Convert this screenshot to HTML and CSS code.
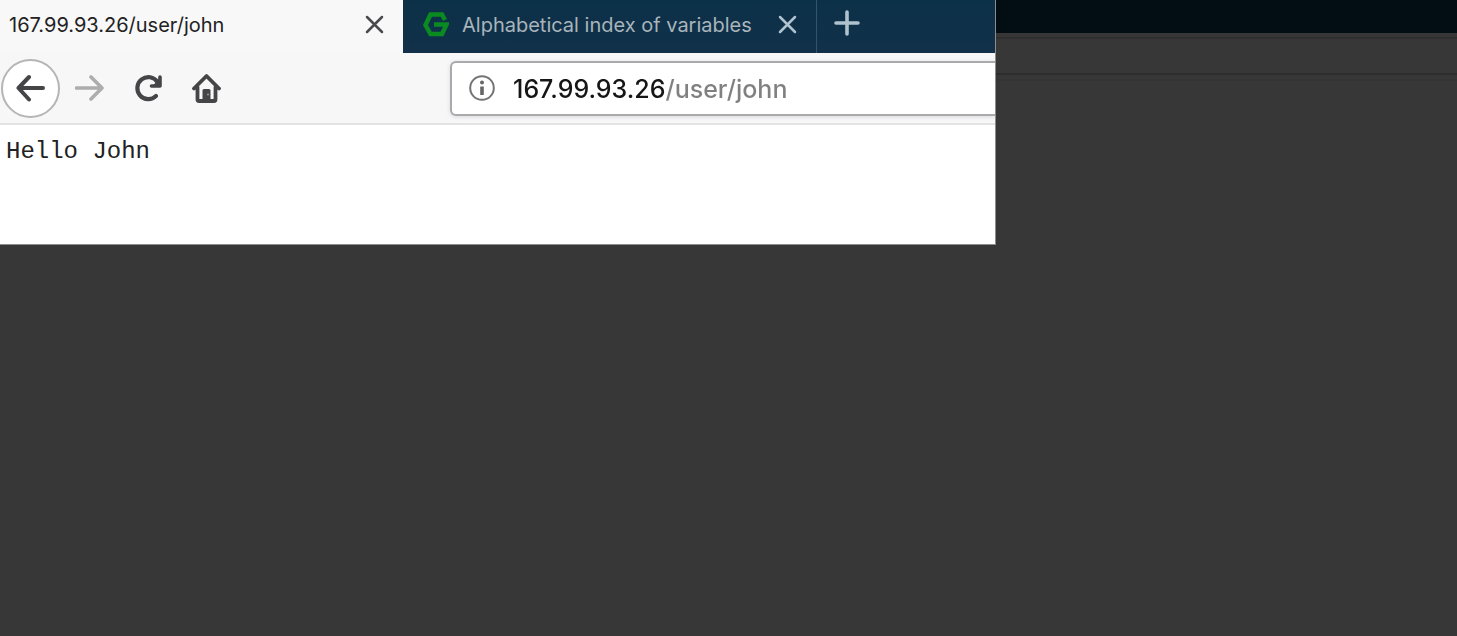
FILE: index.html
```html
<!DOCTYPE html>
<html lang="en">
<head>
<meta charset="utf-8">
<title>167.99.93.26/user/john</title>
<link rel="stylesheet" href="styles.css">
</head>
<body>
<div class="desktop">
  <section class="browser">
    <div class="tabs">
      <div class="tab tab-active">
        <span class="tab-title">167.99.93.26/user/john</span>
        <button class="icon-button" type="button" aria-label="Close tab">
          <svg width="20" height="20" viewBox="0 0 20 20"><path d="M3 2 18 17M18 2 3 17" fill="none" stroke="#4a4a4c" stroke-width="2.500" stroke-linecap="round"/></svg>
        </button>
      </div>
      <div class="tab tab-idle">
        <svg class="favicon" width="26" height="26" viewBox="0 0 26 26"><path d="M22 8 19 2.500H7.500L2.500 13 7.500 22H19L23.500 12.500H11" fill="none" stroke="#0b8a22" stroke-width="4.500"/></svg>
        <span class="tab-title">Alphabetical index of variables</span>
        <button class="icon-button" type="button" aria-label="Close tab">
          <svg width="20" height="20" viewBox="0 0 20 20"><path d="M3 2 18 17M18 2 3 17" fill="none" stroke="#b0c2cd" stroke-width="2.500" stroke-linecap="round"/></svg>
        </button>
      </div>
      <button class="icon-button new-tab" type="button" aria-label="New tab">
        <svg width="28" height="28" viewBox="0 0 28 28"><path d="M14 2V24M3 13H25" fill="none" stroke="#b0c2cd" stroke-width="3.600" stroke-linecap="round"/></svg>
      </button>
    </div>
    <div class="toolbar">
      <button class="icon-button back" type="button" aria-label="Back">
        <svg width="30" height="30" viewBox="0 0 30 30"><path d="M13 4 2.500 15 13 26.500M3 15H27" fill="none" stroke="#454547" stroke-width="4" stroke-linecap="round" stroke-linejoin="round"/></svg>
      </button>
      <button class="icon-button" type="button" aria-label="Forward">
        <svg width="30" height="30" viewBox="0 0 30 30"><path d="M16 4 27 15 16 26M26 15H1.500" fill="none" stroke="#adadae" stroke-width="3.600" stroke-linecap="round" stroke-linejoin="round"/></svg>
      </button>
      <button class="icon-button" type="button" aria-label="Reload">
        <svg width="30" height="30" viewBox="0 0 30 30"><path d="M23 23A11 11 0 1 1 24.500 9" fill="none" stroke="#454547" stroke-width="4.200" stroke-linecap="round"/><path d="M27 4V13H18.500" fill="none" stroke="#454547" stroke-width="3.600" stroke-linecap="round" stroke-linejoin="round"/><path d="M27 5V13H19.500Z" fill="#454547"/></svg>
      </button>
      <button class="icon-button" type="button" aria-label="Home">
        <svg width="30" height="30" viewBox="0 0 30 30"><path d="M3 15.500 15.500 3 28 15.500M6.500 14V26.500Q6.500 28 8 28H23Q24.500 28 24.500 26.500V14" fill="none" stroke="#454547" stroke-width="3.800" stroke-linecap="round" stroke-linejoin="round"/><path d="M11.500 28V17.500Q11.500 16 13 16H18Q19.500 16 19.500 17.500V28Z" fill="#454547"/><circle cx="17" cy="21.500" r="1" fill="#999"/></svg>
      </button>
      <label class="address">
        <svg width="26" height="26" viewBox="0 0 26 26" aria-hidden="true"><circle cx="13" cy="13" r="11.800" fill="none" stroke="#747476" stroke-width="2"/><circle cx="13" cy="7.500" r="2" fill="#666"/><path d="M13 11.500V20" stroke="#666" stroke-width="3.600"/></svg>
        <input class="url" type="text" value="167.99.93.26/user/john" aria-label="Address">
      </label>
    </div>
    <main class="page"><pre class="output">Hello John</pre></main>
  </section>
  <div class="backdrop">
    <div class="backdrop-tabs"></div>
    <div class="backdrop-toolbar"></div>
    <div class="backdrop-edge"></div>
  </div>
</div>
</body>
</html>
```
FILE: styles.css
```css
* {
  box-sizing: border-box;
}

body {
  margin: 0;
  background: #373737;
  font-family: Inter, Roboto, sans-serif;
}

.desktop {
  display: grid;
  grid-template-columns: 996fr 461fr;
  align-items: start;
}

.browser {
  min-width: 0;
  overflow: hidden;
  background: #fff;
  border-right: 1px solid #8c8c8c;
  border-bottom: 1px solid #8c8c8c;
}

.tabs {
  display: flex;
  height: 53px;
  background: linear-gradient(#0b3148, #12304a);
}

.tab {
  display: flex;
  align-items: center;
  height: 100%;
  padding: 0 19px 4px 9px;
  font-size: 20px;
  line-height: 28px;
  white-space: nowrap;
}

.tab-active {
  flex: 0 1 403px;
  justify-content: space-between;
  background: #f8f8f9;
  color: #222;
}

.tab-idle {
  flex: 0 1 414px;
  padding-left: 20px;
  border-right: 1px solid #365469;
  color: #a9b4bb;
}

.tab-idle .tab-title {
  flex: 1;
  padding-left: 13px;
}

.icon-button {
  display: flex;
  align-items: center;
  justify-content: center;
  flex: none;
  padding: 0;
  border: 0;
  background: none;
}

.new-tab {
  width: 60px;
  padding-bottom: 6px;
}

.toolbar {
  display: flex;
  align-items: center;
  gap: 28px;
  height: 72px;
  padding-left: 1px;
  background: #f7f7f8;
  border-bottom: 2px solid #e3e2e5;
}

.back {
  width: 59px;
  height: 59px;
  margin-right: -13px;
  border: 2px solid #b5b4b6;
  border-radius: 50%;
  background: #fff;
}

.address {
  display: flex;
  flex: 1;
  align-items: center;
  gap: 18px;
  min-width: 0;
  height: 55px;
  margin-left: 201px;
  padding-left: 17px;
  background: #fff;
  border: 2px solid #aaa9ab;
  border-right: 0;
  border-radius: 6px 0 0 6px;
  box-shadow: 0 1px 4px #d9d6da;
}

.url {
  flex: 1;
  min-width: 0;
  padding: 2px 0 0;
  border: 0;
  outline: 0;
  color: #777;
  font: 500 25px/32px Inter, Roboto, sans-serif;
  background: linear-gradient(to right, #161616 152px, #808080 152px);
  background-clip: text;
  -webkit-text-fill-color: transparent;
}

.page {
  min-height: 119px;
  padding: 13px 6px;
}

.output {
  margin: 0;
  color: #222;
  font: 24px/28px "Liberation Mono", monospace;
}

.backdrop-tabs {
  height: 33px;
  background: #020e14;
}

.backdrop-toolbar {
  height: 38px;
  margin-top: 4px;
  border-top: 2px solid #2f2f2f;
  border-bottom: 2px solid #2d2d2d;
}

.backdrop-edge {
  height: 2px;
  margin-top: 4px;
  background: #343434;
}
```
